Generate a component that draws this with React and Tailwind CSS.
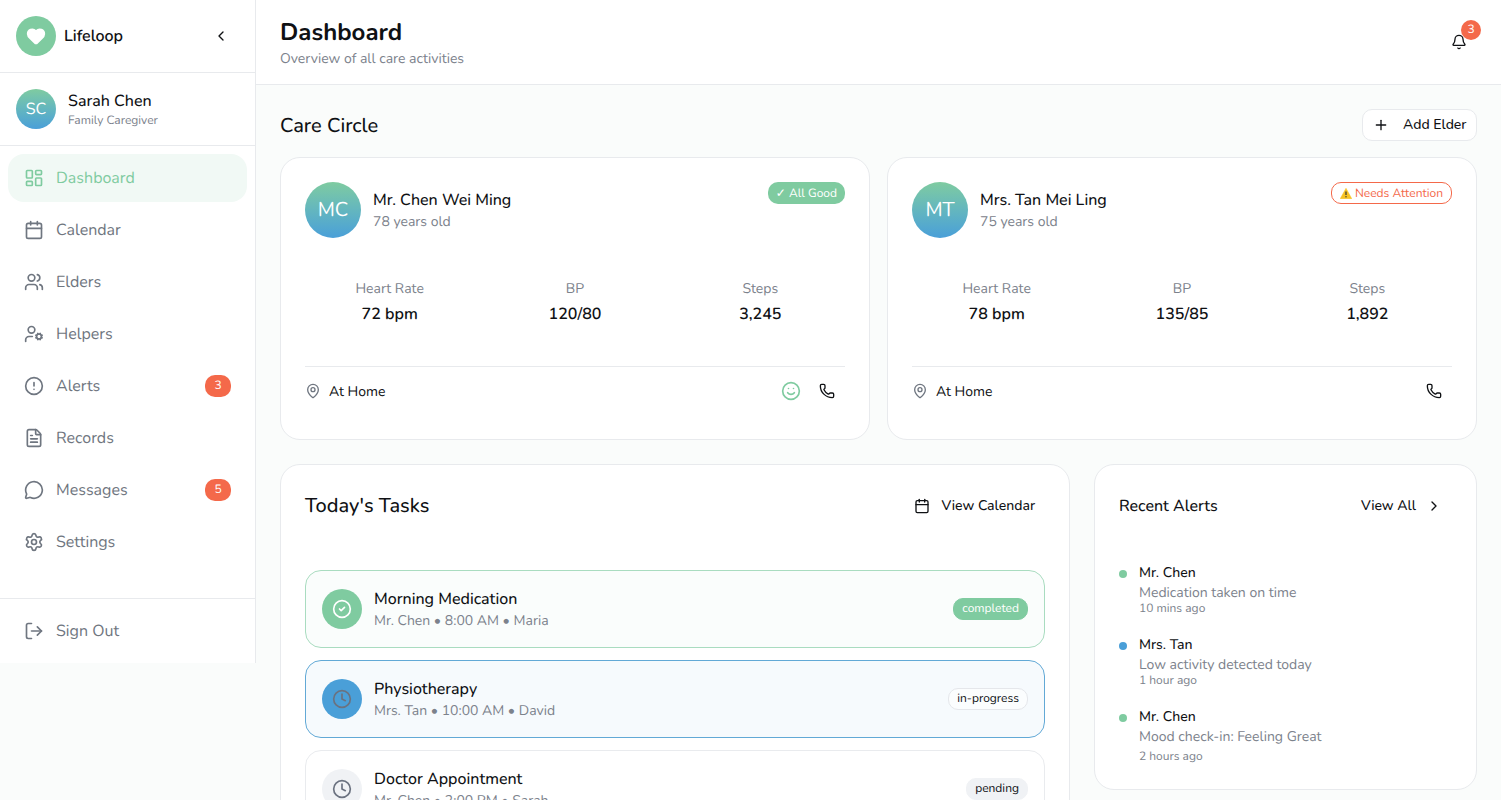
import {
  Bell, Calendar, ChevronLeft, ChevronRight, CircleAlert, CircleCheck, Clock, FileText, Heart,
  LayoutDashboard, LogOut, MapPin, MessageCircle, Phone, Plus, Settings, Smile, UserCog, Users,
} from "lucide-react"

const NAV = [
  { name: "Dashboard", icon: LayoutDashboard, active: true },
  { name: "Calendar", icon: Calendar },
  { name: "Elders", icon: Users },
  { name: "Helpers", icon: UserCog },
  { name: "Alerts", icon: CircleAlert, badge: 3 },
  { name: "Records", icon: FileText },
  { name: "Messages", icon: MessageCircle, badge: 5 },
  { name: "Settings", icon: Settings },
]

const ELDERS = [
  { initials: "MC", name: "Mr. Chen Wei Ming", age: "78 years old", hr: "72 bpm", bp: "120/80", steps: "3,245", good: true },
  { initials: "MT", name: "Mrs. Tan Mei Ling", age: "75 years old", hr: "78 bpm", bp: "135/85", steps: "1,892" },
]

const TASKS = [
  {
    title: "Morning Medication", meta: "Mr. Chen • 8:00 AM • Maria", status: "completed", icon: CircleCheck,
    row: "border-[#a9dcc0] bg-[#fafdfc]", circle: "bg-[#7fcba0] text-white",
    badge: "bg-[#7fcba0] text-white border-[#7fcba0]",
  },
  {
    title: "Physiotherapy", meta: "Mrs. Tan • 10:00 AM • David", status: "in-progress", icon: Clock,
    row: "border-[#62a9d6] bg-[#f6fafd]", circle: "bg-[#4a9fd8] text-[#6b7280]",
    badge: "bg-white/50 text-[#0f1114] border-[#e5e7eb]",
  },
  {
    title: "Doctor Appointment", meta: "Mr. Chen • 2:00 PM • Sarah", status: "pending", icon: Clock,
    row: "border-[#e9ebee] bg-white", circle: "bg-[#f0f2f5] text-[#6b7280]",
    badge: "bg-[#f0f2f5] text-[#0f1114] border-[#f0f2f5]",
  },
]

const ALERTS = [
  { who: "Mr. Chen", text: "Medication taken on time", time: "10 mins ago", dot: "bg-[#7fcba0]", gap: "-mt-0.5" },
  { who: "Mrs. Tan", text: "Low activity detected today", time: "1 hour ago", dot: "bg-[#4a9fd8]", gap: "-mt-0.5" },
  { who: "Mr. Chen", text: "Mood check-in: Feeling Great", time: "2 hours ago", dot: "bg-[#7fcba0]", gap: "mt-0.5" },
]

const Sidebar = () => (
  <aside className="w-[256px] h-[663px] shrink-0 flex flex-col bg-white border-r border-[#e8eaed]">
    <div className="h-[73px] shrink-0 flex items-center justify-between pl-4 pr-[26px] border-b border-[#e8eaed]">
      <div className="flex items-center gap-2">
        <div className="w-10 h-10 rounded-full bg-[#7fcba0] flex items-center justify-center">
          <Heart size={20} className="text-white fill-white" />
        </div>
        <span className="font-semibold text-[#0f1114]">Lifeloop</span>
      </div>
      <ChevronLeft size={16} className="text-[#0f1114]" />
    </div>

    <div className="h-[73px] shrink-0 flex items-center gap-3 px-4 border-b border-[#e8eaed]">
      <div className="w-10 h-10 rounded-full bg-gradient-to-b from-[#7fcba0] to-[#4a9fd8] flex items-center justify-center text-white">
        SC
      </div>
      <div>
        <div className="font-medium leading-6 text-[#0f1114]">Sarah Chen</div>
        <div className="text-xs leading-4 text-[#7c828c]">Family Caregiver</div>
      </div>
    </div>

    <nav className="flex-1 flex flex-col gap-1 p-2">
      {NAV.map(item => (
        <div
          key={item.name}
          className={`h-12 shrink-0 flex items-center gap-3 px-4 rounded-2xl ${item.active ? "bg-[#f1f9f5] text-[#7fcba0]" : "text-[#6f7680]"}`}
        >
          <item.icon size={20} />
          <span className="flex-1">{item.name}</span>
          {item.badge && (
            <span className="w-[26px] h-[22px] rounded-[10px] bg-[#f4694a] text-white text-xs flex items-center justify-center">
              {item.badge}
            </span>
          )}
        </div>
      ))}
    </nav>

    <div className="border-t border-[#e8eaed] p-2">
      <div className="h-12 flex items-center gap-3 px-4 text-[#6f7680]">
        <LogOut size={20} />
        <span>Sign Out</span>
      </div>
    </div>
  </aside>
)

const Stat = ({ label, value }) => (
  <div className="text-center">
    <div className="text-sm leading-5 text-[#7c828c] mb-[3px]">{label}</div>
    <div className="font-semibold leading-6 text-[#0f1114]">{value}</div>
  </div>
)

const ElderCard = ({ elder }) => (
  <div className="h-[283px] bg-white border border-[#e8eaed] rounded-[20px] p-6 flex flex-col">
    <div className="flex items-start justify-between">
      <div className="flex items-center gap-3">
        <div className="w-14 h-14 pt-0.5 rounded-full bg-gradient-to-b from-[#7fcba0] to-[#4a9fd8] flex items-center justify-center text-white text-xl">
          {elder.initials}
        </div>
        <div>
          <div className="font-medium leading-6 text-[#0f1114]">{elder.name}</div>
          <div className="text-sm leading-5 text-[#7c828c]">{elder.age}</div>
        </div>
      </div>
      {elder.good ? (
        <span className="h-[22px] px-2 pt-px rounded-[10px] bg-[#7fcba0] text-white text-xs flex items-center">✓ All Good</span>
      ) : (
        <span className="h-[22px] px-2 pt-px rounded-[10px] border border-[#f4694a] text-[#f4694a] text-xs flex items-center gap-[3px]">
          <svg width="12" height="11" viewBox="0 0 12 11">
            <path d="M6 0.3 L11.8 10.7 L0.2 10.7 Z" fill="#f7c325" stroke="#f7c325" strokeWidth="0.5" strokeLinejoin="round" />
            <path d="M6 3.4 V7" stroke="#333" strokeWidth="1.2" />
            <circle cx="6" cy="8.8" r="0.7" fill="#333" />
          </svg>
          Needs Attention
        </span>
      )}
    </div>

    <div className="grid grid-cols-3 gap-4 mt-[41px]">
      <Stat label="Heart Rate" value={elder.hr} />
      <Stat label="BP" value={elder.bp} />
      <Stat label="Steps" value={elder.steps} />
    </div>

    <div className="mt-auto border-t border-[#e8eaed] flex items-center justify-between h-[49px]">
      <div className="flex items-center gap-2 text-sm text-[#0f1114]">
        <MapPin size={16} className="text-[#6f7680]" />
        <span className="pt-0.5">At Home</span>
      </div>
      <div className="flex items-center gap-[18px] pr-2.5">
        {elder.good && <Smile size={20} className="text-[#7fcba0]" />}
        <Phone size={16} className="text-[#0f1114]" />
      </div>
    </div>
  </div>
)

const TaskRow = ({ task }) => (
  <div className={`h-[78px] shrink-0 flex items-center gap-3 px-4 rounded-2xl border ${task.row}`}>
    <div className={`w-10 h-10 rounded-full flex items-center justify-center ${task.circle}`}>
      <task.icon size={20} />
    </div>
    <div className="flex-1">
      <div className="font-medium leading-6 text-[#0f1114]">{task.title}</div>
      <div className="text-sm leading-5 text-[#7c828c]">{task.meta}</div>
    </div>
    <span className={`h-[22px] px-2 rounded-[10px] border text-xs flex items-center ${task.badge}`}>{task.status}</span>
  </div>
)

export default function App() {
  return (
    <div className="flex items-start h-[800px] overflow-hidden bg-[#fafcfb] font-['Nunito','Lato',sans-serif] [text-rendering:geometricPrecision]">
      <Sidebar />

      <div className="flex-1 min-w-0">
        <header className="h-[85px] bg-white border-b border-[#e8eaed] flex items-center justify-between pl-6 pr-6">
          <div>
            <h1 className="text-2xl leading-8 pt-0.5 font-bold text-[#0f1114]">Dashboard</h1>
            <p className="text-sm leading-5 text-[#7c828c]">Overview of all care activities</p>
          </div>
          <div className="relative w-10 h-10 flex items-center justify-center mr-[-2px]">
            <Bell size={16} className="text-[#0f1114]" />
            <span className="absolute -top-0.5 right-[-2px] w-5 h-5 rounded-full bg-[#f4694a] text-white text-xs flex items-center justify-center">3</span>
          </div>
        </header>

        <main className="px-6 pt-6">
          <div className="flex items-center justify-between h-8 mb-4">
            <h2 className="text-xl font-medium pt-1 text-[#0f1114]">Care Circle</h2>
            <button className="w-[115px] h-8 bg-white border border-[#e8eaed] rounded-[10px] flex items-center gap-3.5 pl-2.5 text-sm font-medium text-[#0f1114]">
              <Plus size={16} />
              Add Elder
            </button>
          </div>

          <div className="grid grid-cols-[590px_590px] gap-x-[17px] mb-6">
            {ELDERS.map(e => <ElderCard key={e.initials} elder={e} />)}
          </div>

          <div className="grid grid-cols-[790px_383px] gap-6 items-start">
            <section className="bg-white border border-[#e8eaed] rounded-[20px] p-6">
              <div className="flex items-center justify-between h-8 mb-[49px] pt-0.5">
                <h3 className="text-xl font-medium pt-0.5 text-[#0f1114]">Today's Tasks</h3>
                <div className="flex items-center gap-3 pr-2.5 text-sm font-medium text-[#0f1114]">
                  <Calendar size={16} />
                  View Calendar
                </div>
              </div>
              <div className="flex flex-col gap-3">
                {TASKS.map(t => <TaskRow key={t.title} task={t} />)}
              </div>
            </section>

            <section className="h-[326px] bg-white border border-[#e8eaed] rounded-[20px] p-6">
              <div className="flex items-center justify-between h-8 mb-12 pt-0.5">
                <h3 className="text-base font-medium text-[#0f1114]">Recent Alerts</h3>
                <div className="flex items-center gap-2.5 pr-2.5 text-sm font-medium text-[#0f1114]">
                  View All
                  <ChevronRight size={16} />
                </div>
              </div>
              <div className="flex flex-col gap-[18px] -mt-[6px]">
                {ALERTS.map((a, i) => (
                  <div key={i} className="flex gap-3">
                    <span className={`w-2 h-2 rounded-full mt-[7px] shrink-0 ${a.dot}`} />
                    <div>
                      <div className="text-sm leading-5 font-medium text-[#0f1114]">{a.who}</div>
                      <div className="text-sm leading-5 text-[#7c828c]">{a.text}</div>
                      <div className={`text-xs leading-4 text-[#7c828c] ${a.gap}`}>{a.time}</div>
                    </div>
                  </div>
                ))}
              </div>
            </section>
          </div>
        </main>
      </div>
    </div>
  )
}
